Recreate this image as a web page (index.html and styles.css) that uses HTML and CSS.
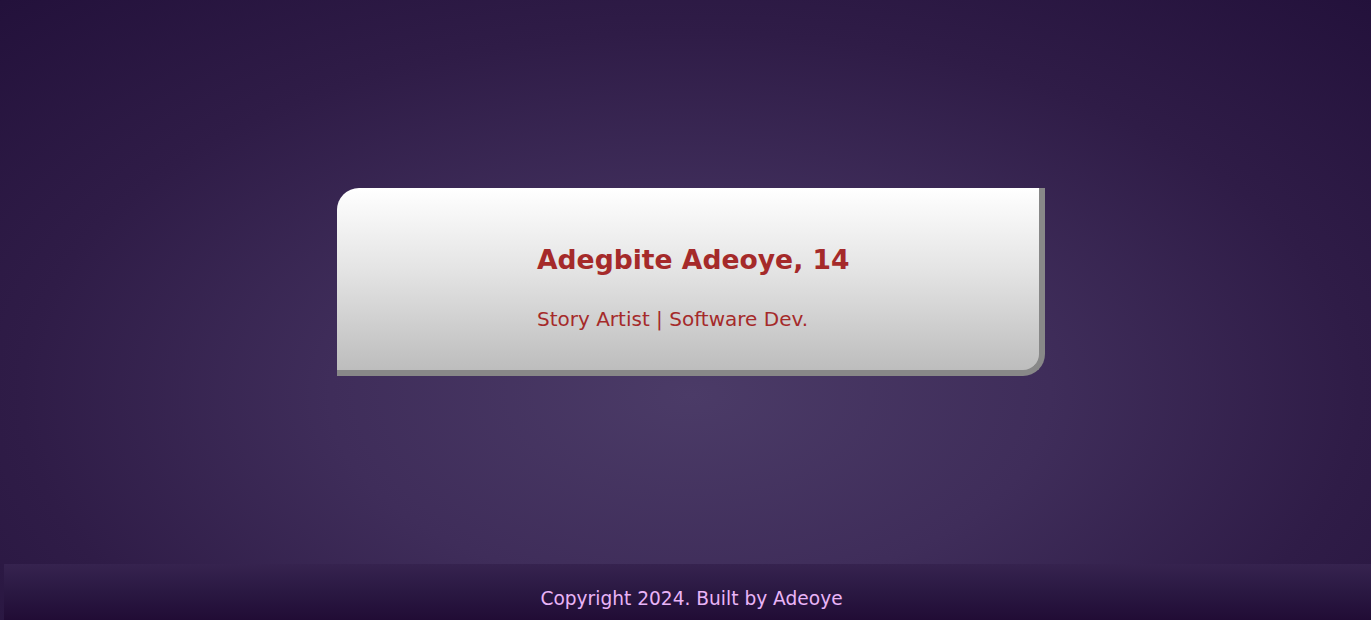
FILE: index.html
```html
<!DOCTYPE html>
<html lang="en">
<head>
<meta charset="utf-8">
<title>Adegbite Adeoye</title>
<link rel="stylesheet" href="styles.css">
</head>
<body>
<main class="stage">
  <section class="card">
    <h1 class="name">Adegbite Adeoye, 14</h1>
    <p class="role">Story Artist | Software Dev.</p>
  </section>
</main>
<footer class="footer">
  <p class="copy">Copyright 2024. Built by Adeoye</p>
</footer>
</body>
</html>
```
FILE: styles.css
```css
html, body {
  margin: 0;
  padding: 0;
  height: 100%;
}
body {
  display: flex;
  flex-direction: column;
  min-height: 620px;
  font-family: "DejaVu Sans", "Noto Sans", sans-serif;
  background: radial-gradient(ellipse 75% 90% at 690px 395px, #4b3b67 0%, #3f2d5a 35%, #2f1c47 65%, #22103a 100%);
  background-color: #2a1842;
}
.stage {
  flex: 1;
  display: flex;
  align-items: center;
  justify-content: center;
  padding-left: 11px;
}
.card {
  box-sizing: border-box;
  width: 708px;
  height: 188px;
  padding: 52px 0 0 200px;
  background: linear-gradient(to bottom, #ffffff 0%, #e4e4e4 45%, #bdbdbd 100%);
  border-right: 6px solid #888888;
  border-bottom: 6px solid #888888;
  border-radius: 22px 0 22px 0;
}
.name {
  margin: 0;
  font-size: 26.6px;
  font-weight: bold;
  line-height: 40px;
  color: #a52a2a;
}
.role {
  margin: 26px 0 0;
  font-size: 20px;
  line-height: 26px;
  color: #a52a2a;
}
.footer {
  height: 56px;
  margin-left: 4px;
  padding-left: 8px;
  display: flex;
  align-items: flex-end;
  justify-content: center;
  background: linear-gradient(to bottom, #36234f 0%, #2a1842 50%, #210c35 100%);
}
.copy {
  margin: 0 0 9px;
  font-size: 18.6px;
  line-height: 24px;
  color: #e9b4f7;
}
```
